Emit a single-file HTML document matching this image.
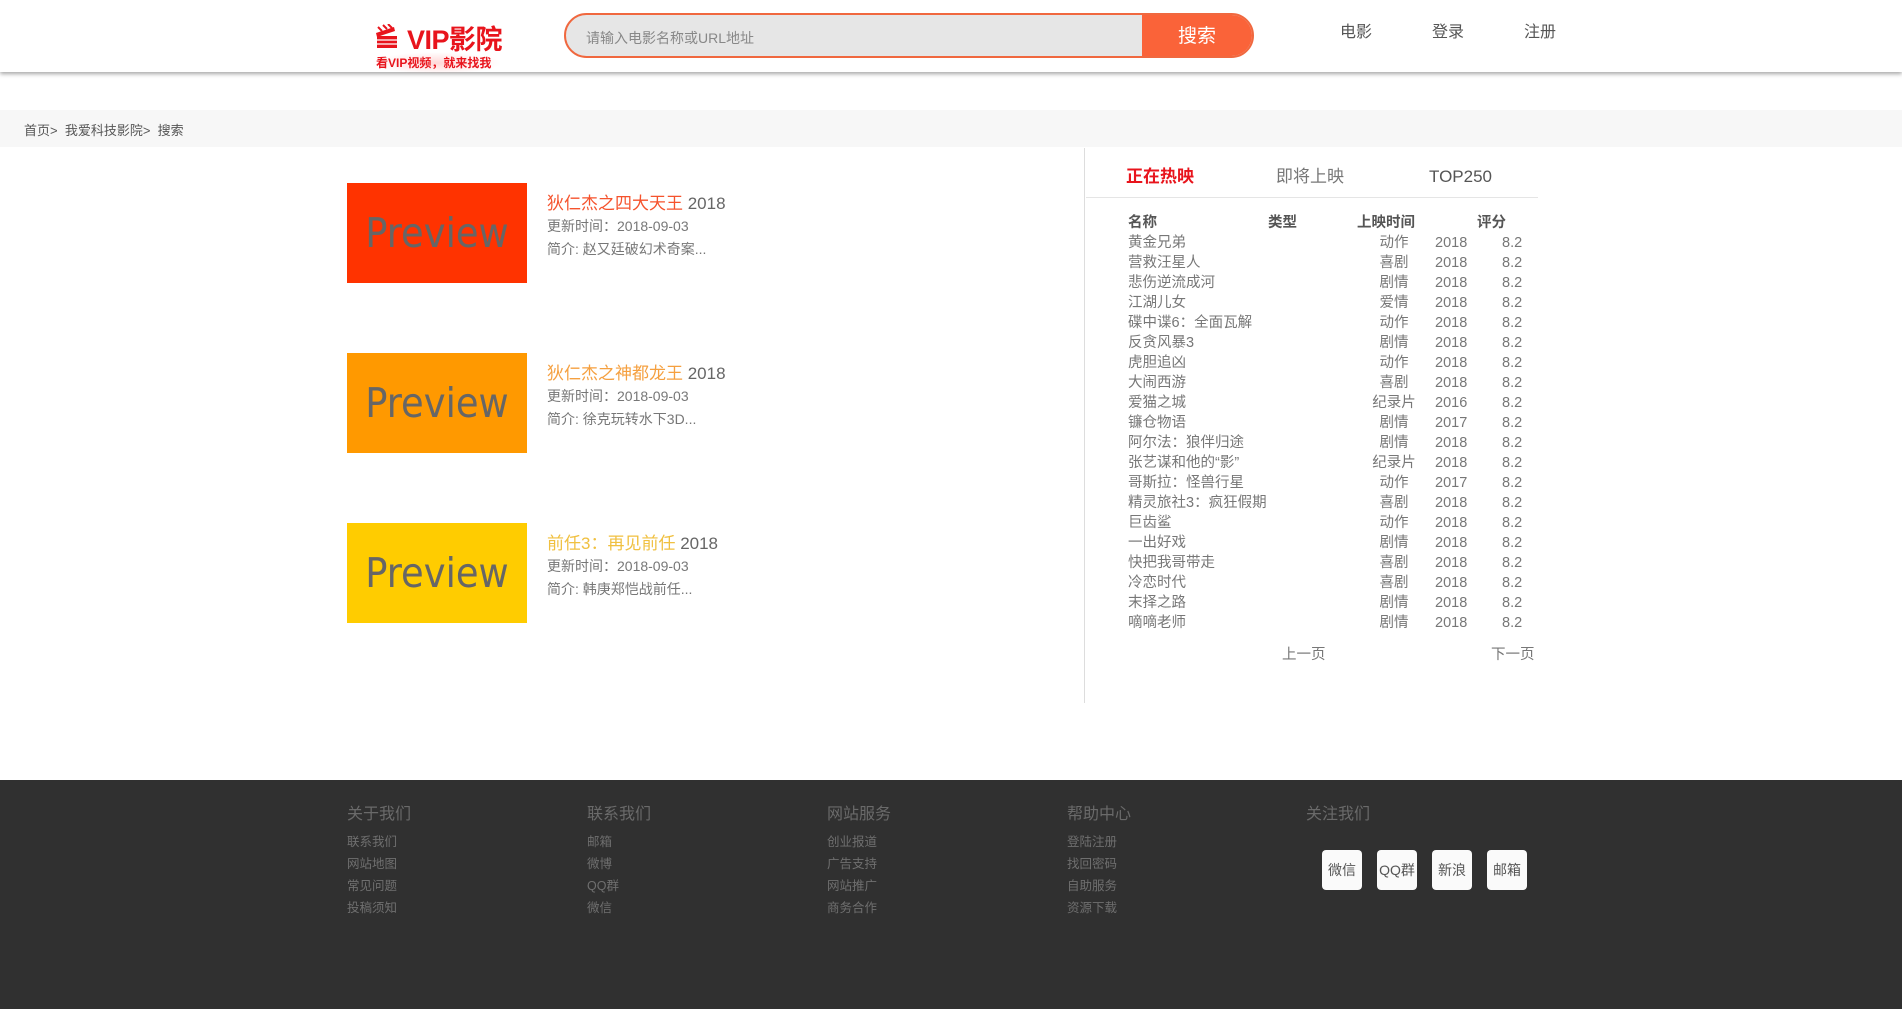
<!DOCTYPE html>
<html><head><meta charset="utf-8"><style>
*{margin:0;padding:0;box-sizing:border-box}
body{width:1902px;height:1009px;overflow:hidden;background:#fff;font-family:"Liberation Sans","Noto Sans CJK SC",sans-serif;color:#666;position:relative}
.a{position:absolute;white-space:nowrap}
.hdr{position:absolute;left:0;top:0;width:1902px;height:72px;background:#fff;box-shadow:0 2px 4px rgba(0,0,0,.35)}
.search{position:absolute;left:564px;top:13px;width:690px;height:45px;border:2px solid #f0683f;border-radius:23px;background:#e6e6e6;overflow:hidden}
.search span{position:absolute;left:20px;top:13px;font-size:14px;color:#888}
.search b{position:absolute;right:0;top:0;width:110px;height:100%;background:#fa6339;color:#fff;font-weight:normal;font-size:19px;text-align:center;line-height:43px}
.nav{font-size:16px;color:#555;top:18px}
.crumb{position:absolute;left:0;top:110px;width:1902px;height:37px;background:#f7f7f7}
.img{position:absolute;left:347px;width:180px;height:100px;font-family:"DejaVu Sans Condensed","Liberation Sans",sans-serif;font-size:41px;color:#666;text-align:center;line-height:100px}
.t{font-size:17px;left:547px}
.s{font-size:14px;color:#777;left:547px}
.tab{font-size:17px;top:165px;line-height:24px}
.row{position:absolute;left:1128px;font-size:14.5px;color:#777;height:20px;width:400px;line-height:20px}
.row span{position:absolute;top:0;line-height:20px}
.foot{position:absolute;left:0;top:780px;width:1902px;height:229px;background:#303030}
.fh{font-size:16px;color:#6a6a6a;top:800px}
.fl{font-size:12.5px;color:#6f6f6f}
.btn{position:absolute;top:850px;width:40px;height:40px;background:#fafafa;border-radius:4px;font-size:14px;color:#555;text-align:center;line-height:40px}
</style></head><body>
<div class="hdr"></div>
<svg class="a" style="left:376px;top:24px" width="22" height="26" viewBox="0 0 22 26"><g fill="#e8141c"><path d="M1 12h20v12H1z"/><path d="M0 9l18-6 1 4-18 6z"/><path d="M2 3l4 4M7 1l4 4M12 0l4 4" stroke="#e8141c" stroke-width="2"/></g><path d="M1 16h20M1 20h20" stroke="#fff" stroke-width="1.3"/></svg>
<div class="a" style="left:407px;top:18px;font-size:27px;font-weight:bold;color:#e8141c;letter-spacing:-0.5px">VIP影院</div>
<div class="a" style="left:372px;top:52px;width:130px;height:22px;background:radial-gradient(ellipse,rgba(255,170,170,.45),rgba(255,255,255,0) 70%)"></div>
<div class="a" style="left:376px;top:54px;font-size:12px;font-weight:bold;color:#e8141c">看VIP视频，就来找我</div>
<div class="search"><span>请输入电影名称或URL地址</span><b>搜索</b></div>
<div class="a nav" style="left:1340px">电影</div>
<div class="a nav" style="left:1432px">登录</div>
<div class="a nav" style="left:1524px">注册</div>
<div class="crumb"></div>
<div class="a" style="left:24px;top:120px;font-size:13px;color:#555">首页&gt; &nbsp;我爱科技影院&gt; &nbsp;搜索</div>

<div class="img" style="top:183px;background:#ff3300">Preview</div>
<div class="a t" style="top:189px"><span style="color:#f5532d">狄仁杰之四大天王</span> 2018</div>
<div class="a s" style="top:216px">更新时间：2018-09-03</div>
<div class="a s" style="top:239px">简介: 赵又廷破幻术奇案...</div>

<div class="img" style="top:353px;background:#ff9900">Preview</div>
<div class="a t" style="top:359px"><span style="color:#f5a040">狄仁杰之神都龙王</span> 2018</div>
<div class="a s" style="top:386px">更新时间：2018-09-03</div>
<div class="a s" style="top:409px">简介: 徐克玩转水下3D...</div>

<div class="img" style="top:523px;background:#ffcc00">Preview</div>
<div class="a t" style="top:529px"><span style="color:#f0c040">前任3：再见前任</span> 2018</div>
<div class="a s" style="top:556px">更新时间：2018-09-03</div>
<div class="a s" style="top:579px">简介: 韩庚郑恺战前任...</div>

<div class="a" style="left:1084px;top:148px;width:1px;height:555px;background:#ddd"></div>
<div class="a tab" style="left:1126px;color:#e8141c;font-weight:bold">正在热映</div>
<div class="a tab" style="left:1276px;color:#777">即将上映</div>
<div class="a tab" style="left:1429px;color:#555">TOP250</div>
<div class="a" style="left:1086px;top:197px;width:452px;height:1px;background:#e5e5e5"></div>
<div class="row" style="top:213px;font-weight:bold;color:#555"><span style="left:0">名称</span><span style="left:140px">类型</span><span style="left:229px">上映时间</span><span style="left:349px">评分</span></div>
<div id="rows"></div>
<script>
var d=[["黄金兄弟","动作",2018],["营救汪星人","喜剧",2018],["悲伤逆流成河","剧情",2018],["江湖儿女","爱情",2018],["碟中谍6：全面瓦解","动作",2018],["反贪风暴3","剧情",2018],["虎胆追凶","动作",2018],["大闹西游","喜剧",2018],["爱猫之城","纪录片",2016],["镰仓物语","剧情",2017],["阿尔法：狼伴归途","剧情",2018],["张艺谋和他的“影”","纪录片",2018],["哥斯拉：怪兽行星","动作",2017],["精灵旅社3：疯狂假期","喜剧",2018],["巨齿鲨","动作",2018],["一出好戏","剧情",2018],["快把我哥带走","喜剧",2018],["冷恋时代","喜剧",2018],["末择之路","剧情",2018],["嘀嘀老师","剧情",2018]];
var h="";d.forEach(function(r,i){h+='<div class="row" style="top:'+(233+i*20)+'px"><span style="left:0">'+r[0]+'</span><span style="left:236px;width:60px;text-align:center">'+r[1]+'</span><span style="left:307px">'+r[2]+'</span><span style="left:374px">8.2</span></div>'});
document.getElementById("rows").innerHTML=h;
</script>
<div class="a" style="left:1282px;top:643px;font-size:14.5px;color:#777">上一页</div>
<div class="a" style="left:1491px;top:643px;font-size:14.5px;color:#777">下一页</div>

<div class="foot"></div>
<div class="a fh" style="left:347px">关于我们</div>
<div class="a fh" style="left:587px">联系我们</div>
<div class="a fh" style="left:827px">网站服务</div>
<div class="a fh" style="left:1067px">帮助中心</div>
<div class="a fh" style="left:1306px">关注我们</div>
<div class="a fl" style="left:347px;top:831px;line-height:22px">联系我们<br>网站地图<br>常见问题<br>投稿须知</div>
<div class="a fl" style="left:587px;top:831px;line-height:22px">邮箱<br>微博<br>QQ群<br>微信</div>
<div class="a fl" style="left:827px;top:831px;line-height:22px">创业报道<br>广告支持<br>网站推广<br>商务合作</div>
<div class="a fl" style="left:1067px;top:831px;line-height:22px">登陆注册<br>找回密码<br>自助服务<br>资源下载</div>
<div class="btn" style="left:1322px">微信</div>
<div class="btn" style="left:1377px">QQ群</div>
<div class="btn" style="left:1432px">新浪</div>
<div class="btn" style="left:1487px">邮箱</div>
</body></html>
